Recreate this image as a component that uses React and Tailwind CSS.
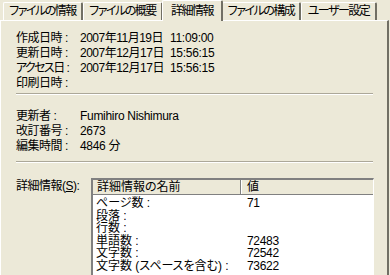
const tabs = [
  { label: "ファイルの情報", w: "w-[80px]" },
  { label: "ファイルの概要", w: "w-[80px]" },
  { label: "詳細情報", w: "w-[61px]", active: true },
  { label: "ファイルの構成", w: "w-[79px]" },
  { label: "ユーザー設定", w: "w-[76px]" },
];

const dates = [
  ["作成日時", "2007年11月19日", "11:09:00"],
  ["更新日時", "2007年12月17日", "15:56:15"],
  ["アクセス日", "2007年12月17日", "15:56:15", true],
  ["印刷日時", "", ""],
];

const edits = [
  ["更新者", "Fumihiro Nishimura"],
  ["改訂番号", "2673"],
  ["編集時間", "4846 分"],
];

const props = [
  ["ページ数 :", "71"],
  ["段落 :", ""],
  ["行数 :", ""],
  ["単語数 :", "72483"],
  ["文字数 :", "72542"],
  ["文字数 (スペースを含む) :", "73622"],
];

function Tab({ label, w, active }) {
  const base = `${w} whitespace-nowrap tracking-[-1.5px] bg-[#ECE9D8] border-t border-l border-white border-r-2 border-r-[#716F64] rounded-t-[2px] flex justify-center`;
  if (active) {
    return (
      <div className={`${base} relative z-10 -mx-[1px] h-[21px] -mb-[1px] items-start pt-[3px]`}>
        {label}
      </div>
    );
  }
  return <div className={`${base} h-[18px] items-center`}>{label}</div>;
}

function Groove() {
  return <div className="mr-[14px] border-t border-t-[#ACA899] border-b border-b-white" />;
}

function Label({ text, tight }) {
  return (
    <span className={`w-[64px] whitespace-nowrap ${tight ? "tracking-[-1.6px]" : "tracking-[-0.5px]"}`}>
      {text}
      <span className="ml-[3px]">:</span>
    </span>
  );
}

export default function App() {
  return (
    <div className="w-[390px] h-[275px] overflow-hidden bg-[#ECE9D8] text-[12px] text-black flex flex-col font-['Liberation_Sans','Noto_Sans_CJK_JP',sans-serif] [font-feature-settings:'palt'] leading-[15px]">
      <div className="h-[20px] flex items-end pl-[3px] shrink-0">
        {tabs.map((t) => (
          <Tab key={t.label} {...t} />
        ))}
      </div>

      <div className="flex-1 mr-[1px] border-t border-l border-white border-r-2 border-r-[#716F64] pl-[15px] pt-[10px]">
        {dates.map(([k, d, t, tight]) => (
          <div key={k} className="flex h-[15px]">
            <Label text={k} tight={tight} />
            <span className="w-[90px] whitespace-nowrap tracking-[-0.5px]">{d}</span>
            <span className="tracking-[-0.3px]">{t}</span>
          </div>
        ))}
        <div className="mt-[2px]">
          <Groove />
        </div>

        <div className="mt-[14px]">
          {edits.map(([k, v]) => (
            <div key={k} className="flex h-[15px]">
              <Label text={k} />
              <span className="tracking-[-0.3px]">{v}</span>
            </div>
          ))}
        </div>
        <div className="mt-[7px]">
          <Groove />
        </div>

        <div className="mt-[15px] flex">
          <span className="w-[75px] pt-[1px] whitespace-nowrap tracking-[-0.5px]">
            詳細情報(<span className="underline">S</span>):
          </span>
          <div className="w-[283px] h-[120px] border-t-2 border-l-2 border-t-[#808080] border-l-[#808080] border-r border-r-white bg-white">
            <div className="flex h-[15px] bg-[#ECE9D8] border-b border-b-[#808080]">
              <div className="w-[148px] pl-[4px] border-r border-r-[#808080] leading-[14px] whitespace-nowrap">詳細情報の名前</div>
              <div className="pl-[5px] border-l border-l-white leading-[14px]">値</div>
            </div>
            <div className="pt-[2px]">
              {props.map(([k, v]) => (
                <div key={k} className="flex h-[12.6px] leading-[12.6px]">
                  <div className="w-[150px] pl-[3px] whitespace-nowrap">{k}</div>
                  <div className="pl-[4px] tracking-[-0.3px]">{v}</div>
                </div>
              ))}
            </div>
          </div>
        </div>
      </div>
    </div>
  );
}
